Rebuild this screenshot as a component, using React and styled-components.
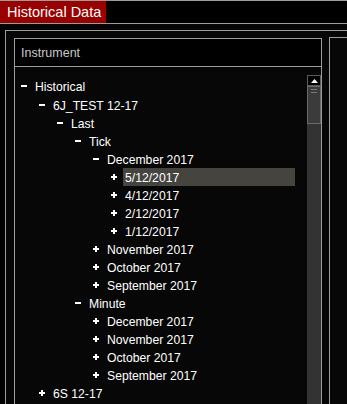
import * as React from "react";
import styled, { createGlobalStyle } from "styled-components";

const line = "#9c9c9c";

const GlobalStyle = createGlobalStyle`
  html, body {
    margin: 0;
    padding: 0;
    background: #000;
  }
  body {
    font-family: "Liberation Sans", Arial, sans-serif;
  }
`;

const Window = styled.div`
  width: 347px;
  height: 404px;
  overflow: hidden;
  display: flex;
  flex-direction: column;
  background: #000;
`;

const TabBar = styled.div`
  display: flex;
  height: 22px;
  border-top: 1px solid ${line};
  border-bottom: 1px solid ${line};
  background: #000;
`;

const Tab = styled.div`
  width: 106px;
  padding-left: 7px;
  box-sizing: border-box;
  background: #990000;
  color: #fff;
  font-size: 14.5px;
  line-height: 22px;
  white-space: nowrap;
`;

const Gap = styled.div`
  height: 6px;
  background: #050505;
`;

const Frame = styled.div`
  flex: 1;
  min-height: 0;
  margin-left: 5px;
  border-top: 1px solid ${line};
  border-left: 1px solid ${line};
  padding: 6px 0 0 8px;
  display: flex;
  gap: 7px;
  background: #060606;
`;

const Panel = styled.div`
  width: 308px;
  flex-shrink: 0;
  margin-top: 1px;
  border: 1px solid ${line};
  border-bottom: none;
  display: flex;
  flex-direction: column;
  box-sizing: border-box;
`;

const SidePanel = styled.div`
  flex: 1;
  border-top: 1px solid ${line};
  border-left: 1px solid ${line};
  background: #070707;
`;

const PanelHeader = styled.div`
  height: 27px;
  border-bottom: 1px solid ${line};
  padding-left: 6px;
  display: flex;
  align-items: center;
  color: #c8c8c8;
  font-size: 12.5px;
  background: #000;
`;

const PanelBody = styled.div`
  flex: 1;
  display: flex;
  background: #070707;
`;

const Tree = styled.div`
  flex: 1;
  padding: 9px 12px 0 6px;
`;

const Row = styled.div`
  display: flex;
  align-items: center;
  height: ${(p) => p.height}px;
  padding-left: ${(p) => p.depth * 18}px;
`;

const Label = styled.span`
  flex: 1;
  margin-left: 6px;
  padding: 1px 0 0 2px;
  height: 17px;
  line-height: 18px;
  color: #fff;
  font-size: 12.2px;
  white-space: nowrap;
  background: ${(p) => (p.selected ? "#46443f" : "transparent")};
`;

const Scrollbar = styled.div`
  width: 14px;
  margin-top: 8px;
  background: #333;
  display: flex;
  flex-direction: column;
`;

const ScrollButton = styled.div`
  height: 11px;
  box-sizing: border-box;
  border: 1px solid #5a5a5a;
  background: #000;
  display: flex;
  align-items: center;
  justify-content: center;
`;

const Thumb = styled.div`
  height: 38px;
  box-sizing: border-box;
  border: 1px solid #6a6a6a;
  background: #3b3b3b;
  padding: 2px 2px 0;
  display: flex;
  flex-direction: column;
  gap: 2px;
`;

const Grip = styled.div`
  height: 1px;
  margin: 0 1px;
  background: #7a7a7a;
`;

const Expander = ({ open }) => (
  <svg width="6" height="6" viewBox="0 0 6 6">
    <rect x="0" y="2" width="6" height="2" fill="#fff" />
    {!open && <rect x="2" y="0" width="2" height="6" fill="#fff" />}
  </svg>
);

const UpArrow = () => (
  <svg width="7" height="4" viewBox="0 0 7 4">
    <path d="M3.5 0 L7 4 L0 4 Z" fill="#fff" />
  </svg>
);

const rows = [
  { depth: 0, open: true, text: "Historical", height: 19 },
  { depth: 1, open: true, text: "6J_TEST 12-17", height: 19 },
  { depth: 2, open: true, text: "Last" },
  { depth: 3, open: true, text: "Tick" },
  { depth: 4, open: true, text: "December 2017" },
  { depth: 5, open: false, text: "5/12/2017", selected: true },
  { depth: 5, open: false, text: "4/12/2017" },
  { depth: 5, open: false, text: "2/12/2017" },
  { depth: 5, open: false, text: "1/12/2017" },
  { depth: 4, open: false, text: "November 2017" },
  { depth: 4, open: false, text: "October 2017" },
  { depth: 4, open: false, text: "September 2017" },
  { depth: 3, open: true, text: "Minute" },
  { depth: 4, open: false, text: "December 2017" },
  { depth: 4, open: false, text: "November 2017" },
  { depth: 4, open: false, text: "October 2017" },
  { depth: 4, open: false, text: "September 2017" },
  { depth: 1, open: false, text: "6S 12-17" },
];

const App = () => (
  <>
    <GlobalStyle />
    <Window>
      <TabBar>
        <Tab>Historical Data</Tab>
      </TabBar>
      <Gap />
      <Frame>
        <Panel>
          <PanelHeader>Instrument</PanelHeader>
          <PanelBody>
            <Tree>
              {rows.map((r, i) => (
                <Row key={i} depth={r.depth} height={r.height || 18}>
                  <Expander open={r.open} />
                  <Label selected={r.selected}>{r.text}</Label>
                </Row>
              ))}
            </Tree>
            <Scrollbar>
              <ScrollButton>
                <UpArrow />
              </ScrollButton>
              <Thumb>
                <Grip />
                <Grip />
              </Thumb>
            </Scrollbar>
          </PanelBody>
        </Panel>
        <SidePanel />
      </Frame>
    </Window>
  </>
);

export default App;
